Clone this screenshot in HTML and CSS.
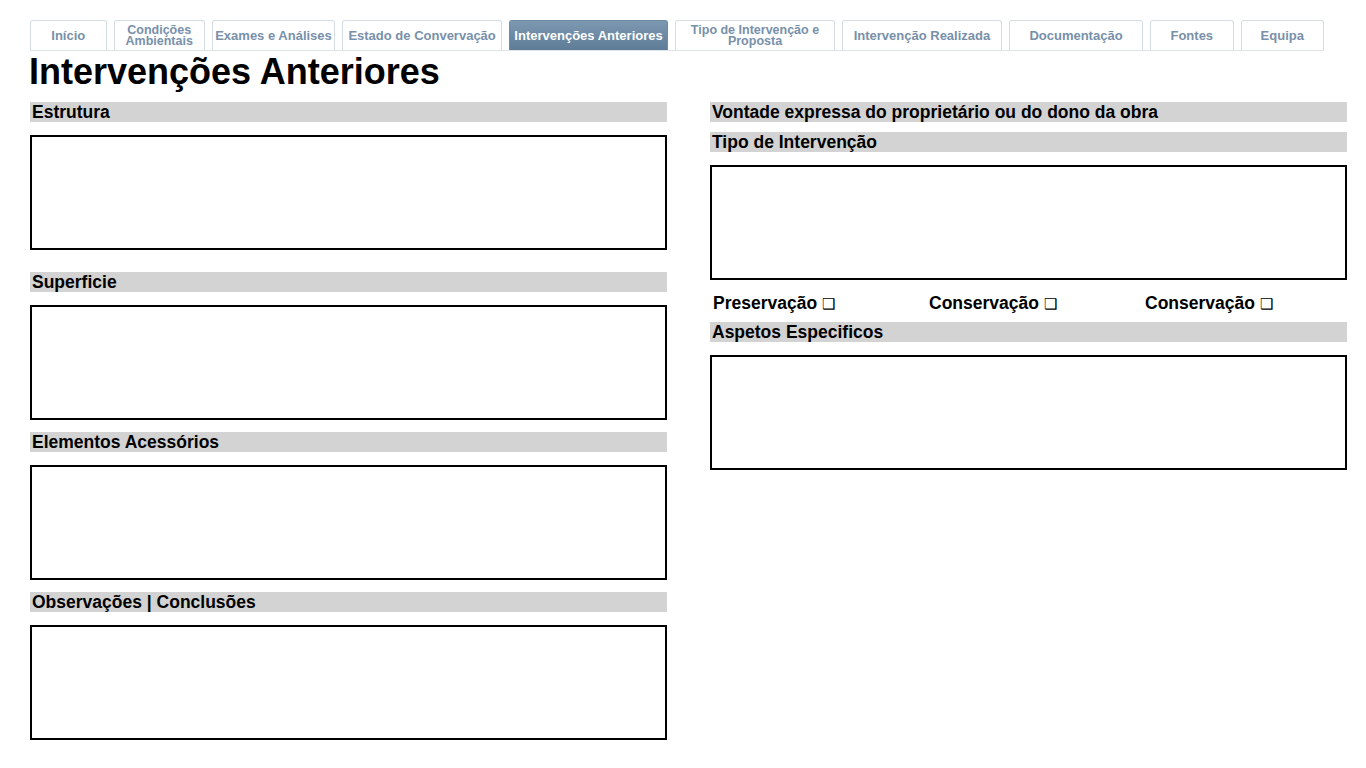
FILE: index.html
```html
<!DOCTYPE html>
<html lang="pt">
<head>
<meta charset="utf-8">
<title>Intervenções Anteriores</title>
<link rel="stylesheet" href="styles.css">
</head>
<body>
<div class="page">
  <nav class="tabs">
    <a class="tab t1">Início</a>
    <a class="tab t2 two">Condições<br>Ambientais</a>
    <a class="tab t3">Exames e Análises</a>
    <a class="tab t4">Estado de Convervação</a>
    <a class="tab t5 active">Intervenções Anteriores</a>
    <a class="tab t6 two">Tipo de Intervenção e<br>Proposta</a>
    <a class="tab t7">Intervenção Realizada</a>
    <a class="tab t8">Documentação</a>
    <a class="tab t9">Fontes</a>
    <a class="tab t10">Equipa</a>
  </nav>
  <h1 class="title">Intervenções Anteriores</h1>
  <div class="cols">
    <div class="col">
      <div class="bar">Estrutura</div>
      <div class="box"></div>
      <div class="bar gap-lg">Superficie</div>
      <div class="box"></div>
      <div class="bar">Elementos Acessórios</div>
      <div class="box"></div>
      <div class="bar">Observações | Conclusões</div>
      <div class="box"></div>
    </div>
    <div class="col">
      <div class="bar">Vontade expressa do proprietário ou do dono da obra</div>
      <div class="bar tight">Tipo de Intervenção</div>
      <div class="box"></div>
      <div class="checks">
        <span class="check">Preservação <span class="cb">❑</span></span>
        <span class="check">Conservação <span class="cb">❑</span></span>
        <span class="check">Conservação <span class="cb">❑</span></span>
      </div>
      <div class="bar after-checks">Aspetos Especificos</div>
      <div class="box"></div>
    </div>
  </div>
</div>
</body>
</html>
```
FILE: styles.css
```css
* { box-sizing: border-box; }
html, body { margin: 0; padding: 0; background: #fff; }
body { font-family: "Liberation Sans", Arial, Helvetica, sans-serif; color: #000; }

.page { padding: 20px 0 0 30px; width: 1366px; }

.tabs {
  display: flex;
  gap: 7px;
  height: 31px;
  border-bottom: 1px solid #dde4ea;
  width: 1294px;
}
.tab {
  display: flex;
  align-items: center;
  justify-content: center;
  text-align: center;
  height: 30px;
  border: 1px solid #d5dee6;
  border-bottom: none;
  border-radius: 3px 3px 0 0;
  font-size: 13px;
  font-weight: bold;
  color: #7890aa;
  background: #fff;
  line-height: 11px;
  white-space: nowrap;
}
.tab.two { font-size: 12.5px; line-height: 11.5px; padding-top: 1px; }
.tab.active {
  background: linear-gradient(#7d98b1, #5e7c97);
  border-color: #6f8aa4;
  color: #fff;
}
.t1 { width: 77px; }
.t2 { width: 92px; }
.t3 { width: 124px; }
.t4 { width: 161px; }
.t5 { width: 160px; }
.t6 { width: 161px; }
.t7 { width: 161px; }
.t8 { width: 135px; }
.t9 { width: 84px; }
.t10 { width: 84px; }

.title {
  margin: 0;
  font-size: 36px;
  font-weight: bold;
  line-height: 40px;
  height: 51px;
  padding-top: 1px;
  margin-left: -1px;
}

.cols { display: flex; gap: 43px; }
.col { width: 637px; display: flex; flex-direction: column; }

.bar {
  background: #d3d3d3;
  height: 20px;
  font-size: 17.5px;
  font-weight: bold;
  line-height: 21px;
  padding-left: 2px;
  margin-bottom: 13px;
  white-space: nowrap;
}
.bar.tight { margin-top: -3px; }
.bar.gap-lg { margin-top: 10px; }
.box {
  height: 115px;
  border: 2px solid #000;
  margin-bottom: 12px;
}
.checks {
  display: flex;
  height: 30px;
  margin-top: -4px;
  padding-left: 3px;
  align-items: center;
}
.check {
  flex: 0 0 216px;
  font-size: 17.5px;
  font-weight: bold;
  white-space: nowrap;
}
.cb { font-size: 15px; font-weight: normal; }
.bar.after-checks { margin-top: 4px; }
```
